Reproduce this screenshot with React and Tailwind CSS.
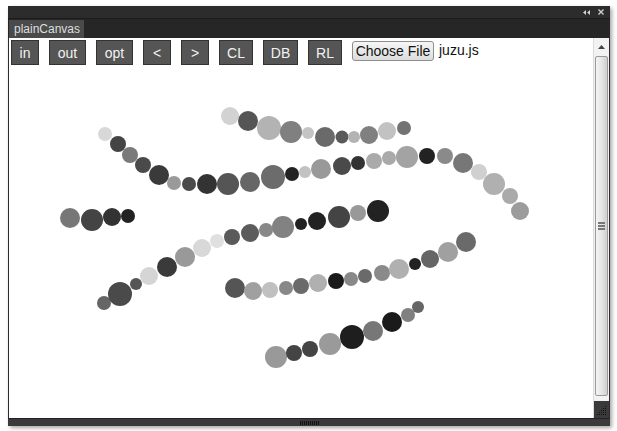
import React from 'react';

const beads = [
  // top chain
  [230, 116, 9, '#d2d2d2'], [248, 121, 10, '#555'], [269, 128, 12, '#b3b3b3'], [291, 132, 11, '#808080'],
  [308, 133, 6, '#c4c4c4'], [325, 137, 10, '#6a6a6a'], [342, 137, 6.5, '#5a5a5a'], [354, 137, 6, '#b3b3b3'],
  [369, 135, 9, '#808080'], [387, 131, 9, '#c2c2c2'], [404, 128, 7, '#737373'],
  // long curve
  [105, 134, 7, '#d8d8d8'], [118, 144, 8, '#444'], [130, 155, 8, '#7a7a7a'], [143, 165, 8, '#4a4a4a'],
  [159, 175, 10, '#3a3a3a'], [174, 183, 7, '#9a9a9a'], [189, 184, 7, '#4a4a4a'], [207, 184, 10, '#333'],
  [228, 184, 11, '#555'], [250, 182, 10, '#666'], [273, 177, 12, '#6c6c6c'], [292, 174, 7, '#222'],
  [305, 172, 6, '#c2c2c2'], [321, 169, 10, '#999'], [342, 166, 9, '#4a4a4a'], [358, 163, 7, '#333'],
  [374, 161, 8, '#aaa'], [389, 158, 7, '#aaa'], [407, 157, 11, '#a3a3a3'], [427, 156, 8, '#222'],
  [445, 156, 8, '#8a8a8a'], [463, 163, 10, '#777'], [479, 172, 8, '#d0d0d0'], [494, 184, 11, '#b0b0b0'],
  [510, 196, 8, '#aaa'], [520, 211, 9, '#9c9c9c'],
  // short left
  [70, 218, 10, '#777'], [92, 220, 11, '#444'], [112, 217, 9, '#333'], [128, 216, 7, '#222'],
  // diagonal
  [104, 303, 7, '#666'], [120, 294, 12, '#4a4a4a'], [136, 284, 6, '#555'], [149, 276, 9, '#d5d5d5'],
  [167, 267, 10, '#3a3a3a'], [185, 257, 10, '#999'], [202, 248, 9, '#d8d8d8'], [217, 241, 7, '#e0e0e0'],
  [232, 237, 8, '#5a5a5a'], [250, 233, 9, '#5c5c5c'], [266, 230, 7, '#888'], [283, 227, 11, '#828282'],
  [301, 224, 6, '#222'], [317, 221, 9, '#222'], [339, 217, 11, '#444'], [358, 213, 8, '#999'],
  [378, 211, 11, '#222'],
  // middle lower
  [235, 288, 10, '#555'], [253, 291, 9, '#a0a0a0'], [270, 290, 8, '#c0c0c0'], [286, 288, 7, '#888'],
  [301, 286, 8, '#6a6a6a'], [318, 283, 9, '#b0b0b0'], [336, 281, 8, '#1a1a1a'], [351, 279, 7, '#888'],
  [365, 276, 7, '#6a6a6a'], [382, 273, 8, '#8a8a8a'], [399, 269, 10, '#b0b0b0'], [415, 264, 6, '#222'],
  [430, 259, 9, '#666'], [448, 252, 10, '#a0a0a0'], [466, 242, 10, '#6a6a6a'],
  // bottom
  [276, 357, 11, '#999'], [294, 353, 8, '#444'], [310, 349, 8, '#444'], [330, 344, 11, '#9a9a9a'],
  [352, 337, 12, '#1e1e1e'], [373, 331, 10, '#777'], [392, 322, 10, '#1a1a1a'], [408, 315, 7, '#808080'],
  [418, 307, 6, '#666'],
];

const tools = [
  ['in', 'w-[28px]'], ['out', 'w-[37px]'], ['opt', 'w-[37px]'], ['<', 'w-[28px]'],
  ['>', 'w-[28px]'], ['CL', 'w-[34px]'], ['DB', 'w-[35px]'], ['RL', 'w-[34px]'],
];

export default function App() {
  return (
    <div className="h-[431px] w-[617px] bg-white pt-[6px] pl-[8px] font-['Liberation_Sans',Arial,sans-serif]">
      <div className="w-[602px] h-[420px] flex flex-col bg-[#2c2c2c] shadow-[2px_2px_4px_rgba(0,0,0,0.35)]">
        {/* title bar */}
        <div className="h-[13px] flex items-center justify-end gap-[8px] pr-[6px] border-b border-[#1c1c1c]">
          <svg width="7" height="5" viewBox="0 0 7 5">
            <path d="M3 0 L0 2.5 L3 5 Z M7 0 L4 2.5 L7 5 Z" fill="#cfcfcf" />
          </svg>
          <svg width="6" height="6" viewBox="0 0 6 6">
            <path d="M0.5 0.5 L5.5 5.5 M5.5 0.5 L0.5 5.5" stroke="#cfcfcf" strokeWidth="1.4" />
          </svg>
        </div>
        {/* tab row */}
        <div className="h-[19px] flex items-end pl-px bg-[#262626]">
          <div className="h-[18px] w-[75px] bg-[#4a4a4a] text-[#dedede] text-[12px] leading-[18px] pl-[5px]">plainCanvas</div>
        </div>
        {/* body */}
        <div className="h-[380px] flex border-x border-[#2c2c2c]">
          <div className="w-[584px] flex flex-col bg-white">
            <div className="h-[29px] flex items-start pt-[2px] pl-[2px]">
              <div className="flex gap-[10px]">
                {tools.map(([label, w]) => (
                  <button
                    key={label}
                    className={`${w} h-[25px] bg-[#555555] border border-[#333] text-[#f2f2f2] text-[14px] leading-none flex items-center justify-center`}
                  >
                    {label}
                  </button>
                ))}
              </div>
              <button className="ml-[10px] mt-px h-[20px] w-[82px] rounded-[3px] border border-[#8e8e8e] bg-gradient-to-b from-[#f6f6f6] to-[#dcdcdc] text-[14px] text-[#111] leading-none">
                Choose File
              </button>
              <span className="ml-[5px] mt-[3px] text-[14px] text-[#111] leading-none">juzu.js</span>
            </div>
            <svg width="584" height="351" viewBox="9 67 584 351" className="block">
              {beads.map(([x, y, r, c], i) => (
                <circle key={i} cx={x} cy={y} r={r} fill={c} />
              ))}
            </svg>
          </div>
          {/* scrollbar */}
          <div className="w-[16px] flex flex-col bg-[#f2f2f2] border-l border-[#dcdcdc]">
            <div className="h-[18px] flex items-center justify-center">
              <svg width="7" height="4" viewBox="0 0 7 4">
                <path d="M0 4 L3.5 0 L7 4 Z" fill="#444" />
              </svg>
            </div>
            <div className="mx-[1px] h-[340px] rounded-[2px] border border-[#9a9a9a] bg-gradient-to-r from-[#f4f4f4] via-[#e6e6e6] to-[#cfcfcf] flex items-center justify-center">
              <div className="flex flex-col gap-[1px]">
                <div className="w-[7px] h-[2px] bg-[#777]" />
                <div className="w-[7px] h-[2px] bg-[#777]" />
                <div className="w-[7px] h-[2px] bg-[#777]" />
              </div>
            </div>
            <div className="flex-1" />
            <div className="h-[17px] bg-[#3a3a3a] flex items-end justify-end p-[2px]">
              <svg width="10" height="10" viewBox="0 0 10 10">
                {[[8, 0], [6, 2], [8, 2], [4, 4], [6, 4], [8, 4], [2, 6], [4, 6], [6, 6], [8, 6], [0, 8], [2, 8], [4, 8], [6, 8], [8, 8]].map(([x, y], i) => (
                  <rect key={i} x={x} y={y} width="1" height="1" fill="#111" />
                ))}
              </svg>
            </div>
          </div>
        </div>
        {/* bottom bar */}
        <div className="h-[8px] flex items-center justify-center bg-[#3a3a3a] border-t border-[#222]">
          <div className="flex gap-[1px]">
            {Array.from({ length: 10 }).map((_, i) => (
              <div key={i} className="w-[1px] h-[4px] bg-[#111]" />
            ))}
          </div>
        </div>
      </div>
    </div>
  );
}
